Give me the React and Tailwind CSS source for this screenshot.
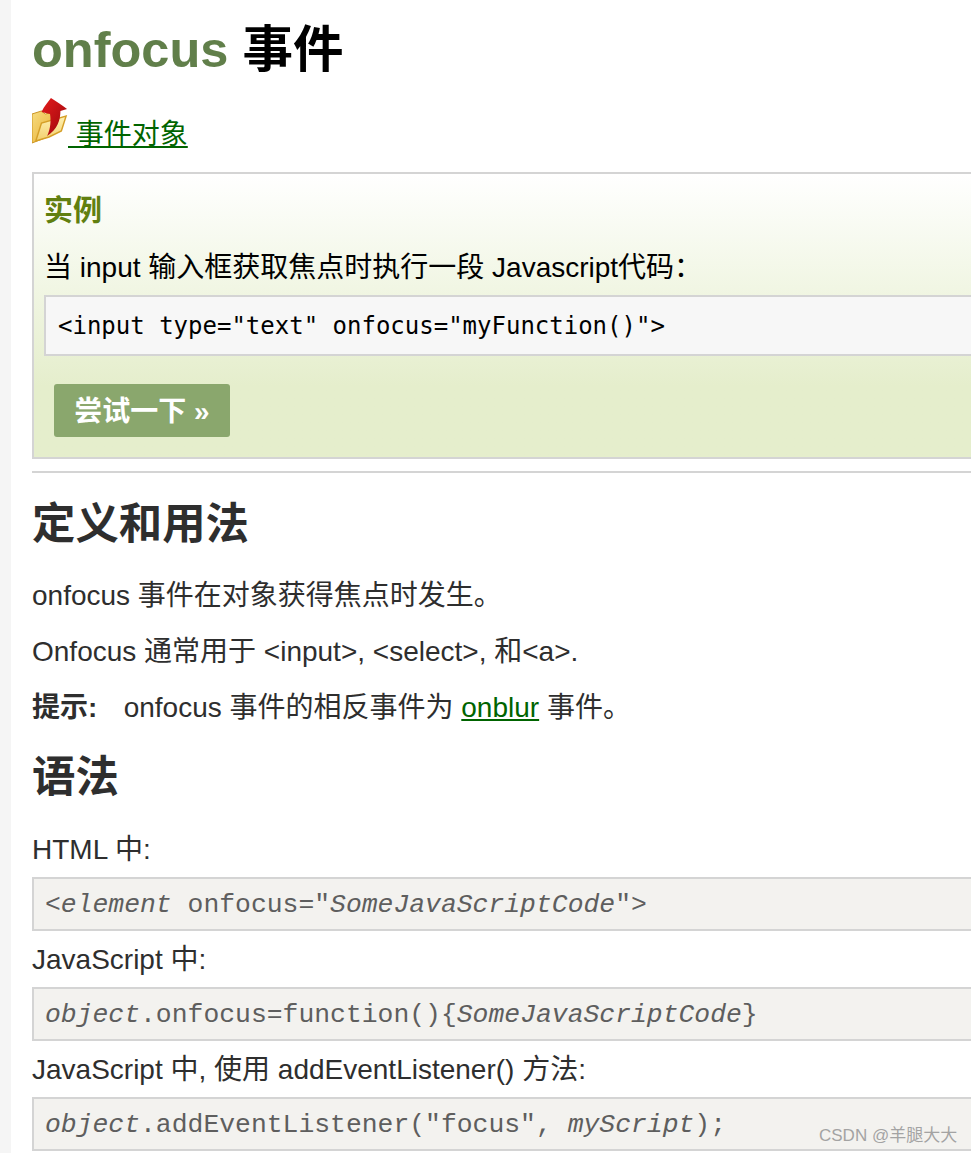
const sans = "font-['Liberation_Sans','Noto_Sans_CJK_SC',sans-serif]";

function FolderIcon() {
  return (
    <svg width="36" height="46" viewBox="0 0 38 46" preserveAspectRatio="none" className="block">
      <defs>
        <linearGradient id="fold" x1="0" y1="0" x2="1" y2="1">
          <stop offset="0" stopColor="#f6dc80" />
          <stop offset="0.6" stopColor="#eec04f" />
          <stop offset="1" stopColor="#c98a14" />
        </linearGradient>
        <linearGradient id="front" x1="0" y1="0" x2="0" y2="1">
          <stop offset="0" stopColor="#fff2b4" />
          <stop offset="1" stopColor="#f2cf6c" />
        </linearGradient>
        <linearGradient id="arrow" x1="0" y1="0" x2="1" y2="1">
          <stop offset="0" stopColor="#e41c1c" />
          <stop offset="0.6" stopColor="#b80f12" />
          <stop offset="1" stopColor="#7d0808" />
        </linearGradient>
      </defs>
      <path d="M0 16 L10 13 L14 16 L24 14 L22 37 L0 45 Z" fill="url(#fold)" stroke="#c9921f" strokeWidth="1" />
      <path d="M4 43 L10 25 L36 18 L31 33 L18 39 Z" fill="url(#front)" stroke="#d59f28" strokeWidth="1.5" />
      <path d="M16 38 C20 30 20 22 19 16 L10 14 C13 8 17 4 20 0 C26 4 32 7 37 11 L30 13 C30 22 27 31 16 38 Z" fill="url(#arrow)" />
    </svg>
  );
}

function Para({ children, className = "" }) {
  return <p className={`text-[28px] leading-[40px] text-[#2e2e2e] ${className}`}>{children}</p>;
}

function SyntaxBox({ children, className = "" }) {
  return (
    <div className={`w-[1000px] h-[54px] border-2 border-[#d4d4d4] bg-[#f3f2ef] pl-[11px] font-['Liberation_Mono',monospace] text-[26.4px] leading-[52px] whitespace-pre text-[#5e5e5e] ${className}`}>
      {children}
    </div>
  );
}

export default function App() {
  return (
    <div className={`relative w-[971px] h-[1153px] overflow-hidden bg-white ${sans} flex`}>
      <div className="w-[11px] shrink-0 bg-[#f5f5f5]" />
      <main className="pl-[21px] min-w-0">
        <h1 className="text-[50.5px] leading-[60px] font-bold text-black mt-[20px]">
          <span className="text-[#617f4a]">onfocus</span> 事件
        </h1>
        <div className="flex items-end h-[48px] mt-[16px]">
          <FolderIcon />
          <a className="text-[28px] leading-[34px] text-[#006400] underline whitespace-pre mb-[-8px]" href="#"> 事件对象</a>
        </div>
        <section className="w-[1000px] h-[287px] mt-[28px] border-2 border-[#d4d4d4] bg-gradient-to-b from-white to-[#e5eecc] to-[75%] pl-[10px]">
          <h2 className="text-[29px] leading-[36px] font-bold text-[#617f10] mt-[19px]">实例</h2>
          <p className="text-[28px] leading-[40px] text-black mt-[19px]">当 input 输入框获取焦点时执行一段 Javascript代码：</p>
          <div className="h-[61px] border-2 border-[#d4d4d4] bg-[#f7f7f7] pl-[12px] font-['DejaVu_Sans_Mono',monospace] text-[24px] leading-[59px] text-black whitespace-pre mt-[7px]">
            {'<input type="text" onfocus="myFunction()">'}
          </div>
          <a href="#" className="block w-[176px] h-[53px] mt-[28px] ml-[10px] rounded-[3px] bg-[#8aa76d] text-center text-white font-bold text-[28px] leading-[55px]">尝试一下 »</a>
        </section>
        <hr className="w-[1000px] h-[2px] border-0 bg-[#d4d4d4] mt-[12px]" />
        <h2 className="text-[43.4px] leading-[52px] font-bold text-[#2e2e2e] mt-[25px]">定义和用法</h2>
        <Para className="mt-[26px]">onfocus 事件在对象获得焦点时发生。</Para>
        <Para className="mt-[16px]">{'Onfocus 通常用于 <input>, <select>, 和<a>.'}</Para>
        <Para className="mt-[16px]"><b className="font-bold mr-[3px]">提示:</b>&nbsp;&nbsp; onfocus 事件的相反事件为 <a href="#" className="text-[#006400] underline">onblur</a> 事件。</Para>
        <h2 className="text-[43.4px] leading-[52px] font-bold text-[#2e2e2e] mt-[23px]">语法</h2>
        <Para className="mt-[27px]">HTML 中:</Para>
        <SyntaxBox className="mt-[7px]">{'<'}<i>element</i>{' onfocus="'}<i>SomeJavaScriptCode</i>{'">'}</SyntaxBox>
        <Para className="mt-[9px]">JavaScript 中:</Para>
        <SyntaxBox className="mt-[7px]"><i>object</i>{'.onfocus=function(){'}<i>SomeJavaScriptCode</i>{'}'}</SyntaxBox>
        <Para className="mt-[9px]">JavaScript 中, 使用 addEventListener() 方法:</Para>
        <SyntaxBox className="mt-[7px]"><i>object</i>{'.addEventListener("focus", '}<i>myScript</i>{');'}</SyntaxBox>
      </main>
      <span className="absolute left-[819px] top-[1125px] text-[17px] leading-[22px] text-[#a3a3a3]">CSDN @羊腿大大</span>
    </div>
  );
}
